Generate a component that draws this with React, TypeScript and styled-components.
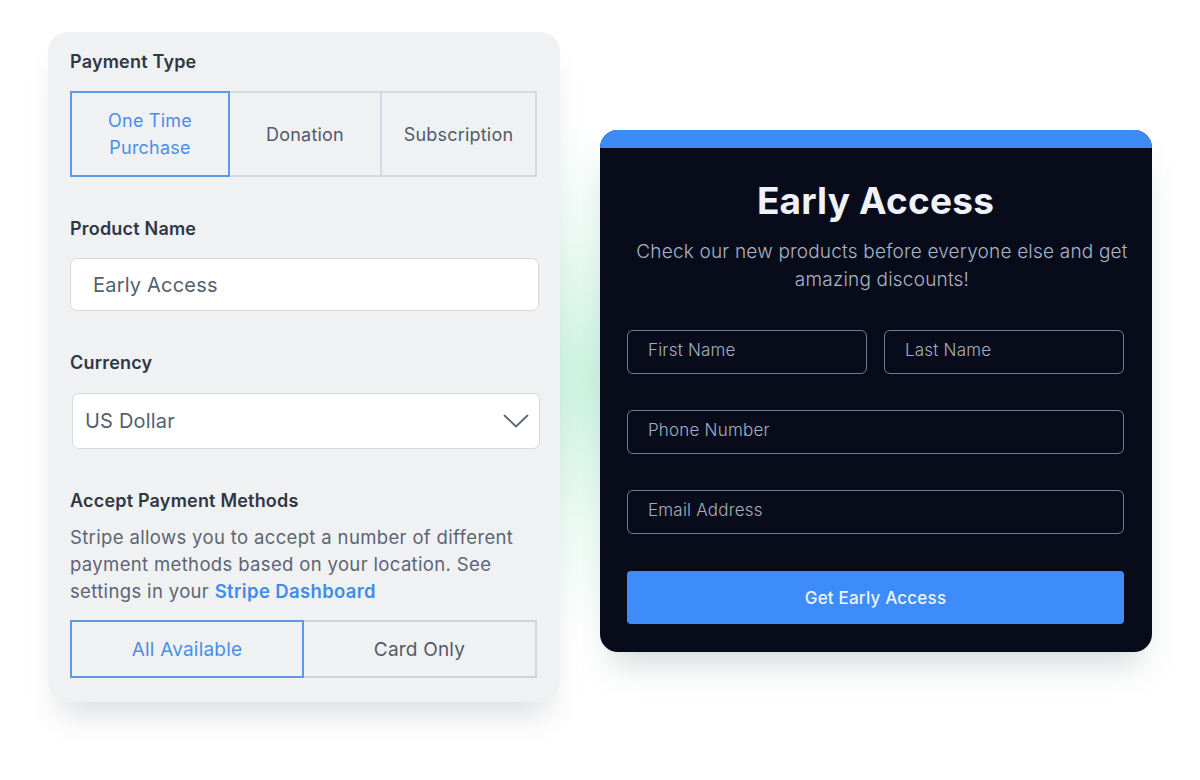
import React from 'react';
import styled, { createGlobalStyle } from 'styled-components';

const GlobalStyle = createGlobalStyle`
  html, body { margin: 0; padding: 0; background: #ffffff; }
  body { font-family: Inter, "Open Sans", sans-serif; }
  * { box-sizing: border-box; }
`;

const paymentTypes = [
    { label: 'One Time\nPurchase', width: 160 },
    { label: 'Donation', width: 154 },
    { label: 'Subscription', width: 157 },
];
const fieldsRow = ['First Name', 'Last Name'];

export default function App() {
    return (
        <>
            <GlobalStyle />
            <Page>
                <Glow />
                <SettingsCard>
                    <Label>Payment Type</Label>
                    <Segments>
                        {paymentTypes.map((t, i) => (
                            <Segment key={t.label} $active={i === 0} $width={t.width}>
                                {t.label}
                            </Segment>
                        ))}
                    </Segments>

                    <Label $top={40}>Product Name</Label>
                    <TextBox>Early Access</TextBox>

                    <Label $top={40}>Currency</Label>
                    <SelectBox>
                        <span>US Dollar</span>
                        <svg width="26" height="14" viewBox="0 0 26 14" fill="none">
                            <path d="M1.5 1.5 L13 12.5 L24.5 1.5" stroke="#5b6475" strokeWidth="1.8" strokeLinecap="round" strokeLinejoin="round" />
                        </svg>
                    </SelectBox>

                    <Label $top={40}>Accept Payment Methods</Label>
                    <Help>
                        Stripe allows you to accept a number of different payment methods based on your location. See
                        settings in your <Link>Stripe Dashboard</Link>
                    </Help>
                    <MethodRow>
                        <Method $active>All Available</Method>
                        <Method>Card Only</Method>
                    </MethodRow>
                </SettingsCard>

                <FormCard>
                    <TopBar />
                    <FormBody>
                        <Title>Early Access</Title>
                        <Subtitle>Check our new products before everyone else and get amazing discounts!</Subtitle>
                        <FieldGrid>
                            {fieldsRow.map(f => (
                                <Field key={f}>{f}</Field>
                            ))}
                            <Field $wide>Phone Number</Field>
                            <Field $wide>Email Address</Field>
                        </FieldGrid>
                        <Submit>Get Early Access</Submit>
                    </FormBody>
                </FormCard>
            </Page>
        </>
    );
}

// Styled Components
const Page = styled.div`
  position: relative;
  width: 1200px;
  height: 780px;
  overflow: hidden;
  display: flex;
  align-items: flex-start;
  gap: 40px;
  padding: 32px 0 0 48px;
  background: #ffffff;
`;

const Glow = styled.div`
  position: absolute;
  left: 360px;
  top: 120px;
  width: 460px;
  height: 520px;
  background: radial-gradient(ellipse at center, rgba(120, 225, 175, 0.38) 0%, rgba(160, 235, 200, 0.18) 40%, rgba(255, 255, 255, 0) 70%);
  pointer-events: none;
`;

const SettingsCard = styled.div`
  position: relative;
  width: 512px;
  height: 670px;
  padding: 18px 21px 0 22px;
  background: #eff1f3;
  border-radius: 20px;
  box-shadow: 0 22px 30px -10px rgba(60, 70, 90, 0.18);
`;

const Label = styled.div<{ $top?: number }>`
  margin-top: ${p => (p.$top ? `${p.$top}px` : '0')};
  font-size: 18px;
  font-weight: 600;
  line-height: 24px;
  color: #2f3745;
  letter-spacing: 0.2px;
`;

const Segments = styled.div`
  display: flex;
  margin-top: 17px;
  width: 467px;
`;

const Segment = styled.div<{ $active?: boolean; $width: number }>`
  width: ${p => p.$width}px;
  height: 86px;
  display: flex;
  align-items: center;
  justify-content: center;
  text-align: center;
  white-space: pre-line;
  font-size: 18px;
  line-height: 27px;
  letter-spacing: 0.2px;
  color: ${p => (p.$active ? '#4a8fe7' : '#515b6b')};
  border: ${p => (p.$active ? '2px solid #5b9ae8' : '2px solid #d3d9e3')};
  & + & { margin-left: -2px; }
  ${p => p.$active && 'position: relative; z-index: 1;'}
`;

const TextBox = styled.div`
  margin-top: 17px;
  width: 469px;
  height: 53px;
  display: flex;
  align-items: center;
  padding-left: 22px;
  background: #ffffff;
  border: 1.5px solid #d4dae3;
  border-radius: 7px;
  font-size: 20px;
  letter-spacing: 0.2px;
  color: #545e6e;
`;

const SelectBox = styled.div`
  margin: 18px 0 0 2px;
  width: 468px;
  height: 56px;
  display: flex;
  align-items: center;
  justify-content: space-between;
  padding: 0 10px 0 12px;
  background: #ffffff;
  border: 1.5px solid #d4dae3;
  border-radius: 7px;
  font-size: 20px;
  letter-spacing: 0.2px;
  color: #545e6e;
`;

const Help = styled.p`
  margin: 11px 0 0;
  width: 460px;
  font-size: 18.5px;
  line-height: 27px;
  letter-spacing: 0.35px;
  color: #5c6575;
`;

const Link = styled.span`
  color: #3f8cea;
  font-weight: 600;
`;

const MethodRow = styled.div`
  display: flex;
  margin-top: 15px;
  width: 467px;
`;

const Method = styled.div<{ $active?: boolean }>`
  flex: ${p => (p.$active ? '0 0 234px' : '1')};
  height: 58px;
  display: flex;
  align-items: center;
  justify-content: center;
  font-size: 19px;
  letter-spacing: 0.2px;
  color: ${p => (p.$active ? '#4a8fe7' : '#515b6b')};
  border: ${p => (p.$active ? '2px solid #5b9ae8' : '2px solid #d0d4da')};
  & + & { margin-left: -2px; }
  ${p => p.$active && 'position: relative; z-index: 1;'}
`;

const FormCard = styled.div`
  position: relative;
  margin-top: 98px;
  width: 552px;
  height: 522px;
  border-radius: 18px;
  overflow: hidden;
  background: #080c1a;
  box-shadow: 0 22px 34px -12px rgba(60, 90, 90, 0.25);
  display: flex;
  flex-direction: column;
`;

const TopBar = styled.div`
  height: 18px;
  background: #3d8bf6;
`;

const FormBody = styled.div`
  flex: 1;
  padding: 30px 28px 0 27px;
  display: flex;
  flex-direction: column;
`;

const Title = styled.h1`
  margin: 0;
  text-align: center;
  font-size: 37px;
  line-height: 46px;
  font-weight: 700;
  color: #eef2fb;
  letter-spacing: 0.2px;
`;

const Subtitle = styled.p`
  margin: 14px auto 0;
  width: 510px;
  text-align: center;
  font-size: 19px;
  line-height: 28px;
  font-weight: 300;
  letter-spacing: 0.2px;
  color: #aab4c7;
`;

const FieldGrid = styled.div`
  margin-top: 36px;
  display: grid;
  grid-template-columns: 1fr 1fr;
  column-gap: 17px;
  row-gap: 36px;
`;

const Field = styled.div<{ $wide?: boolean }>`
  grid-column: ${p => (p.$wide ? '1 / -1' : 'auto')};
  height: 44px;
  display: flex;
  align-items: center;
  padding: 0 20px 4px;
  border: 1.3px solid #737c8f;
  border-radius: 6px;
  font-size: 17px;
  font-weight: 300;
  letter-spacing: 0.2px;
  color: #a7afbf;
`;

const Submit = styled.div`
  margin-top: 37px;
  height: 53px;
  display: flex;
  align-items: center;
  justify-content: center;
  background: #3d8cf9;
  border-radius: 4px;
  font-size: 17px;
  font-weight: 500;
  letter-spacing: 0.2px;
  color: #eef4ff;
`;
